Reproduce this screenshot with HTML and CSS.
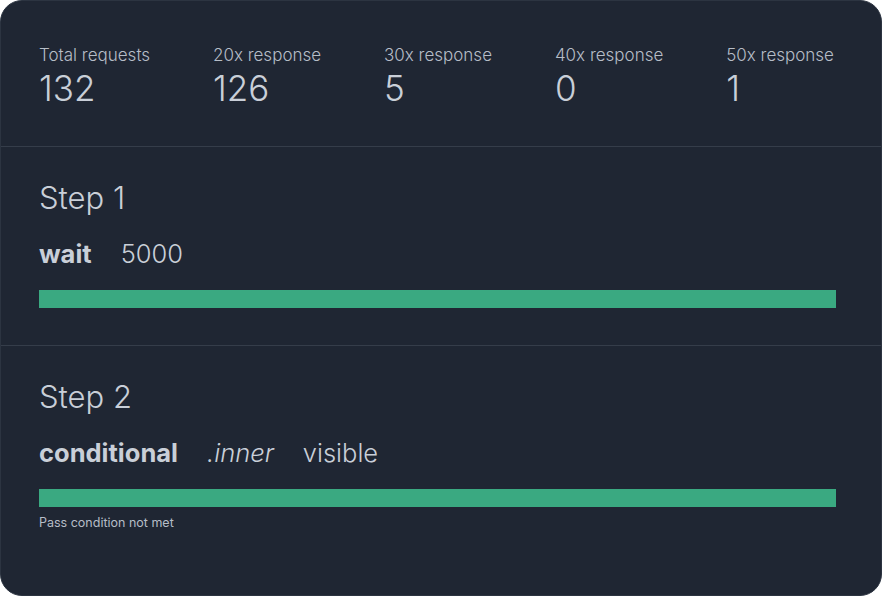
FILE: index.html
```html
<!DOCTYPE html>
<html>
<head>
<link rel="stylesheet" href="styles.css">
</head>
<body>

<div class="card">
  <div class="stats">
    <div class="stat">
      <div class="stat-label">Total requests</div>
      <div class="stat-value">132</div>
    </div>
    <div class="stat">
      <div class="stat-label">20x response</div>
      <div class="stat-value">126</div>
    </div>
    <div class="stat">
      <div class="stat-label">30x response</div>
      <div class="stat-value">5</div>
    </div>
    <div class="stat">
      <div class="stat-label">40x response</div>
      <div class="stat-value">0</div>
    </div>
    <div class="stat">
      <div class="stat-label">50x response</div>
      <div class="stat-value">1</div>
    </div>
  </div>

  <div class="step">
    <h2 class="step-title">Step 1</h2>
    <div class="step-args">
      <span class="arg-name">wait</span>
      <span>5000</span>
    </div>
    <div class="progress"><div class="progress-fill" style="width: 100%"></div></div>
  </div>

  <div class="step">
    <h2 class="step-title">Step 2</h2>
    <div class="step-args">
      <span class="arg-name">conditional</span>
      <span class="arg-selector">.inner</span>
      <span>visible</span>
    </div>
    <div class="progress"><div class="progress-fill" style="width: 100%"></div></div>
    <p class="step-note">Pass condition not met</p>
  </div>
</div>

</body>
</html>
```

FILE: styles.css
```css
html, body {
  margin: 0;
  height: 100%;
  background-color: #ffffff;
}

body {
  font-family: Inter, "Noto Sans", sans-serif;
  color: #c9cfd8;
}

.card {
  box-sizing: border-box;
  height: 100%;
  background-color: #1f2633;
  border: 1px solid #2c3441;
  border-radius: 22px;
  overflow: hidden;
}

.stats {
  display: flex;
  justify-content: space-between;
  padding: 42px 47px 0 38px;
  height: 146px;
  box-sizing: border-box;
  border-bottom: 1px solid #353d4a;
}

.stat-label {
  font-size: 17px;
  line-height: 24px;
  font-weight: 350;
  color: #b6bdc7;
}

.stat-value {
  font-size: 35px;
  line-height: 43px;
  font-weight: 300;
  color: #c9cfd8;
}

.step {
  padding: 32px 45px 0 38px;
  height: 199px;
  box-sizing: border-box;
  border-bottom: 1px solid #353d4a;
}

.step:last-child {
  border-bottom: none;
}

.step-title {
  margin: 0;
  font-size: 31px;
  line-height: 38px;
  font-weight: 300;
  color: #c9cfd8;
}

.step-args {
  display: flex;
  gap: 29px;
  margin-top: 22px;
  font-size: 25.5px;
  line-height: 30px;
  font-weight: 300;
  color: #c9cfd8;
}

.arg-name {
  font-weight: 700;
}

.arg-selector {
  font-style: italic;
}

.progress {
  margin-top: 21px;
  height: 18px;
  background-color: #2a3240;
}

.progress-fill {
  height: 100%;
  background-color: #3aa981;
}

.step-note {
  margin: 8px 0 0;
  font-size: 12.5px;
  line-height: 16px;
  color: #b6bdc7;
}
```
